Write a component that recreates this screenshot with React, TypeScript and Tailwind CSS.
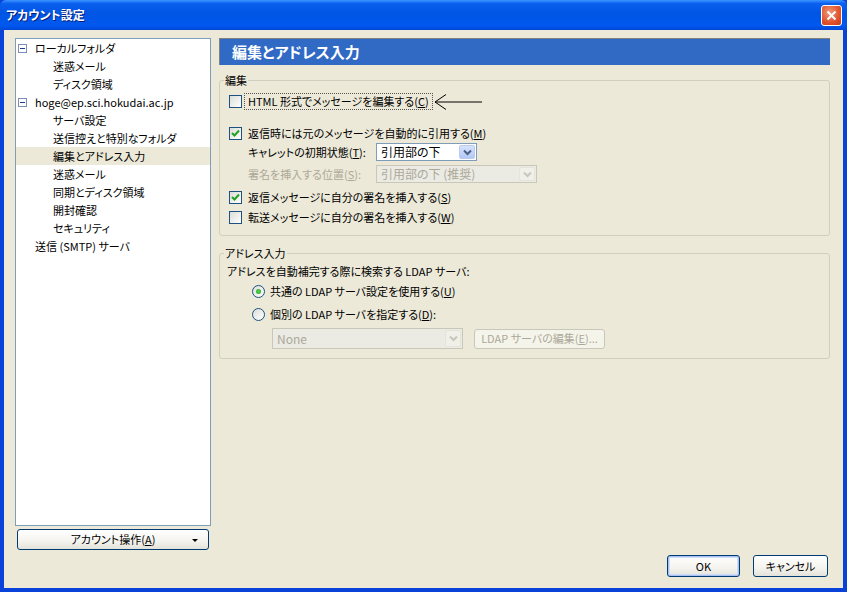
import React from 'react';

// XP 風のアカウント設定ダイアログ
const FONT = "[font-family:'Noto_Sans_CJK_JP','Liberation_Sans',sans-serif] [font-feature-settings:'palt']";

type TreeItem = { label: string; level: 0 | 1; expander?: boolean; selected?: boolean };

const treeItems: TreeItem[] = [
  { label: 'ローカルフォルダ', level: 0, expander: true },
  { label: '迷惑メール', level: 1 },
  { label: 'ディスク領域', level: 1 },
  { label: 'hoge@ep.sci.hokudai.ac.jp', level: 0, expander: true },
  { label: 'サーバ設定', level: 1 },
  { label: '送信控えと特別なフォルダ', level: 1 },
  { label: '編集とアドレス入力', level: 1, selected: true },
  { label: '迷惑メール', level: 1 },
  { label: '同期とディスク領域', level: 1 },
  { label: '開封確認', level: 1 },
  { label: 'セキュリティ', level: 1 },
  { label: '送信 (SMTP) サーバ', level: 0 },
];

const Checkbox = ({ checked }: { checked?: boolean }) => (
  <span className="flex h-[13px] w-[13px] shrink-0 items-center justify-center border border-[#1c5180] bg-[linear-gradient(135deg,#dcdcd7,#ffffff)]">
    {checked && (
      <svg width="9" height="9" viewBox="0 0 9 9">
        <path d="M1 4 L3.5 6.5 L8 1.5" stroke="#21a121" strokeWidth="2" fill="none" />
      </svg>
    )}
  </span>
);

const Radio = ({ checked }: { checked?: boolean }) => (
  <span className="flex h-[13px] w-[13px] shrink-0 items-center justify-center rounded-full border border-[#1c5180] bg-[linear-gradient(135deg,#dcdcd7,#ffffff)]">
    {checked && <span className="h-[5px] w-[5px] rounded-full bg-[radial-gradient(circle,#55d751,#21a121)]" />}
  </span>
);

const Chevron = ({ color }: { color: string }) => (
  <svg width="9" height="7" viewBox="0 0 9 7">
    <path d="M1 1.5 L4.5 5 L8 1.5" stroke={color} strokeWidth="2" fill="none" />
  </svg>
);

const Select = ({ value, width, disabled }: { value: string; width: string; disabled?: boolean }) => (
  <div
    className={`flex h-full shrink-0 items-center border ${width} ${
      disabled ? 'border-[#c9c7ba] bg-[#ebebe4] text-[#aca899]' : 'border-[#7f9db9] bg-white text-black'
    }`}
  >
    <span className="flex-1 truncate pl-[4px] text-[12px]">{value}</span>
    <span
      className={`m-[1px] flex h-[calc(100%-2px)] w-[16px] items-center justify-center rounded-[2px] ${
        disabled ? 'border border-[#e5e4dc] bg-[#f0efe8]' : 'border border-[#b9cbf3] bg-[linear-gradient(#d6e2fd,#b4c8f6)]'
      }`}
    >
      <Chevron color={disabled ? '#c9c7ba' : '#4d6185'} />
    </span>
  </div>
);

const XpButton = ({ children, def, className = '' }: { children: React.ReactNode; def?: boolean; className?: string }) => (
  <button
    className={`flex items-center justify-center rounded-[3px] border border-[#003c74] bg-[linear-gradient(#ffffff,#f4f3ee_60%,#e3e2da)] text-[11px] text-black ${
      def ? 'shadow-[inset_0_0_0_1px_#a8c1f0,inset_0_0_0_2px_#cfdcf8]' : ''
    } ${className}`}
  >
    {children}
  </button>
);

const GroupBox = ({ legend, children, className = '' }: { legend: string; children: React.ReactNode; className?: string }) => (
  <div className={`relative rounded-[3px] border border-[#d0d0bf] ${className}`}>
    <span className="absolute -top-[9px] left-[4px] bg-[#ece9d8] px-[1px] leading-[16px]">{legend}</span>
    {children}
  </div>
);

export default function App() {
  return (
    <div className={`flex h-[592px] w-[847px] flex-col overflow-hidden bg-[#0842d8] text-[11px] text-black ${FONT}`}>
      {/* タイトルバー */}
      <div className="flex h-[30px] shrink-0 items-center justify-between rounded-t-[6px] bg-[linear-gradient(#3d95ff,#0a5fef_12%,#0055e5_45%,#0058ee_85%,#0048d8)] pl-[6px] pr-[5px]">
        <span className="text-[12px] font-bold text-white [text-shadow:1px_1px_#0a1e7a]">アカウント設定</span>
        <div className="flex h-[21px] w-[21px] items-center justify-center rounded-[3px] border border-white bg-[radial-gradient(circle_at_40%_35%,#f09a7c,#e0522c_60%,#c33c18)]">
          <svg width="11" height="11" viewBox="0 0 11 11">
            <path d="M1.5 1.5 L9.5 9.5 M9.5 1.5 L1.5 9.5" stroke="white" strokeWidth="2" />
          </svg>
        </div>
      </div>

      {/* 本体 */}
      <div className="mx-[4px] mb-[4px] flex flex-1 flex-col bg-[#ece9d8] pl-[11px] pr-[13px] pt-[8px]">
        <div className="flex h-[512px] gap-[8px]">
          {/* 左ツリー */}
          <div className="flex w-[196px] flex-col gap-[3px]">
            <div className="flex-1 border border-[#7f9db9] bg-white">
              {treeItems.map((item, i) => (
                <div
                  key={i}
                  className={`flex h-[18px] items-center whitespace-nowrap ${item.selected ? 'bg-[#ece9d8]' : ''}`}
                >
                  {item.level === 0 ? (
                    <>
                      <span className="ml-[2px] flex w-[9px] justify-center">
                        {item.expander && (
                          <span className="flex h-[9px] w-[9px] items-center justify-center border border-[#7b8dbb] bg-white">
                            <span className="h-[1px] w-[5px] bg-[#1c3c8c]" />
                          </span>
                        )}
                      </span>
                      <span className="ml-[8px]">{item.label}</span>
                    </>
                  ) : (
                    <span className="ml-[37px]">{item.label}</span>
                  )}
                </div>
              ))}
            </div>
            <XpButton className="relative mx-[2px] h-[21px]">
              アカウント操作(<u>A</u>)
              <span className="absolute right-[10px] top-[9px] h-0 w-0 border-x-[3px] border-t-[3px] border-x-transparent border-t-black" />
            </XpButton>
          </div>

          {/* 右ペイン */}
          <div className="flex flex-1 flex-col">
            <div className="flex h-[27px] items-center border-l border-t border-[#808080] border-b-[#d4d0c8] border-r-[#d4d0c8] bg-[#316ac5] pl-[12px] text-[15px] font-bold text-white">
              編集とアドレス入力
            </div>

            <GroupBox legend="編集" className="mt-[15px] h-[156px] pl-[9px] pt-[12px]">
              <div className="flex h-[17px] items-center">
                <Checkbox />
                <span className="ml-[2px] whitespace-nowrap border border-dotted border-[#555] px-[3px] leading-[15px]">
                  HTML 形式でメッセージを編集する(<u>C</u>)
                </span>
                <svg width="50" height="18" viewBox="0 0 50 18" className="ml-[1px]">
                  <path d="M1 9 L48 9 M12 1.5 L1 9 L12 16.5" stroke="black" strokeWidth="1" fill="none" />
                </svg>
              </div>
              <div className="mt-[15px] flex h-[17px] items-center gap-[6px]">
                <Checkbox checked />
                <span>
                  返信時には元のメッセージを自動的に引用する(<u>M</u>)
                </span>
              </div>
              <div className="mt-[1px] flex h-[18px] items-center">
                <span className="ml-[19px] w-[128px] shrink-0 whitespace-nowrap">
                  キャレットの初期状態(<u>T</u>):
                </span>
                <Select value="引用部の下" width="w-[101px]" />
              </div>
              <div className="mt-[4px] flex h-[18px] items-center">
                <span className="ml-[19px] w-[128px] shrink-0 whitespace-nowrap text-[#aca899]">
                  署名を挿入する位置(<u>S</u>):
                </span>
                <Select value="引用部の下 (推奨)" width="w-[161px]" disabled />
              </div>
              <div className="mt-[6px] flex h-[17px] items-center gap-[6px]">
                <Checkbox checked />
                <span>
                  返信メッセージに自分の署名を挿入する(<u>S</u>)
                </span>
              </div>
              <div className="mt-[3px] flex h-[17px] items-center gap-[6px]">
                <Checkbox />
                <span>
                  転送メッセージに自分の署名を挿入する(<u>W</u>)
                </span>
              </div>
            </GroupBox>

            <GroupBox legend="アドレス入力" className="mt-[17px] h-[106px] pl-[7px] pt-[9px]">
              <div className="flex h-[17px] items-center">アドレスを自動補完する際に検索する LDAP サーバ:</div>
              <div className="ml-[25px] mt-[3px] flex h-[17px] items-center gap-[5px]">
                <Radio checked />
                <span>
                  共通の LDAP サーバ設定を使用する(<u>U</u>)
                </span>
              </div>
              <div className="ml-[25px] mt-[6px] flex h-[17px] items-center gap-[5px]">
                <Radio />
                <span>
                  個別の LDAP サーバを指定する(<u>D</u>):
                </span>
              </div>
              <div className="ml-[45px] mt-[5px] flex h-[21px] items-center gap-[11px]">
                <Select value="None" width="w-[191px]" disabled />
                <div className="flex h-[20px] w-[131px] items-center justify-center rounded-[3px] border border-[#c9c7ba] bg-[#f5f4ea] text-[#aca899]">
                  LDAP サーバの編集(<u>E</u>)...
                </div>
              </div>
            </GroupBox>
          </div>
        </div>

        {/* OK / キャンセル */}
        <div className="mt-[5px] flex justify-end gap-[13px] pr-[2px]">
          <XpButton def className="h-[22px] w-[73px]">
            OK
          </XpButton>
          <XpButton className="h-[22px] w-[75px]">キャンセル</XpButton>
        </div>
      </div>
    </div>
  );
}
